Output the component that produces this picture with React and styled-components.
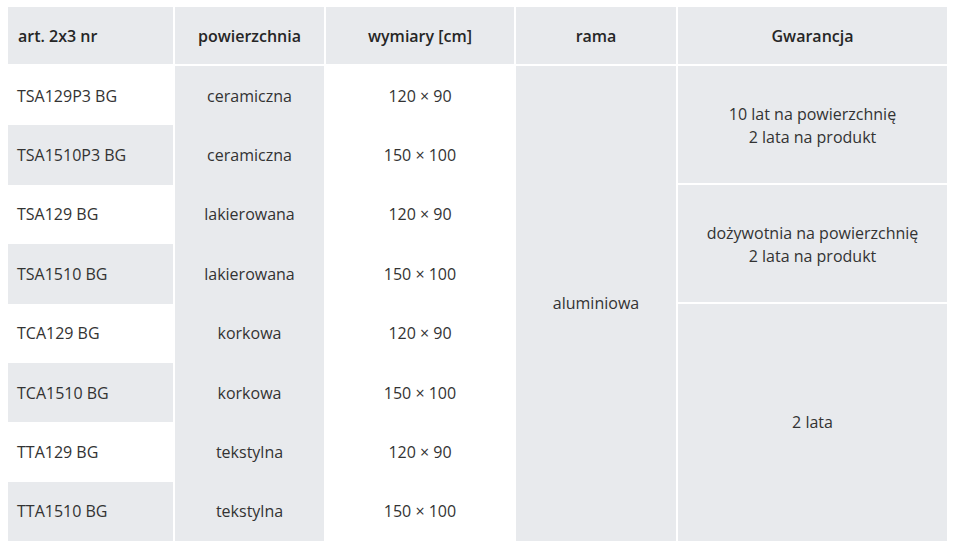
import styled, { createGlobalStyle } from 'styled-components';

const GlobalStyle = createGlobalStyle`
  body {
    margin: 0;
    background: #ffffff;
    font-family: 'Open Sans', 'Noto Sans', sans-serif;
    color: #333333;
  }
`;

const Page = styled.div`
  padding: 7px 0 0 8px;
`;

const Table = styled.div`
  display: grid;
  grid-template-columns: 165px 149px 188px 160px 269px;
  grid-template-rows: 59px repeat(8, 59.375px);
  column-gap: 2px;
  width: 939px;
  font-size: 16px;
`;

const HeadCell = styled.div`
  display: flex;
  align-items: center;
  justify-content: ${(p) => (p.$left ? 'flex-start' : 'center')};
  padding-left: ${(p) => (p.$left ? '10px' : '0')};
  margin-bottom: 2px;
  background: #e8eaed;
  font-weight: 600;
  color: #262626;
`;

const Cell = styled.div`
  display: flex;
  align-items: center;
  justify-content: ${(p) => (p.$left ? 'flex-start' : 'center')};
  padding-left: ${(p) => (p.$left ? '9px' : '0')};
  background: ${(p) => (p.$shaded ? '#e8eaed' : 'transparent')};
  grid-column: ${(p) => p.$col};
`;

const MergedCell = styled.div`
  display: flex;
  align-items: center;
  justify-content: center;
  text-align: center;
  line-height: 23px;
  background: #e8eaed;
  grid-column: ${(p) => p.$col};
  grid-row: ${(p) => p.$rows};
  margin-bottom: ${(p) => (p.$gap ? '2px' : '0')};
  padding-top: ${(p) => (p.$gap ? '4px' : '0')};
`;

const rows = [
  ['TSA129P3 BG', 'ceramiczna', '120 × 90'],
  ['TSA1510P3 BG', 'ceramiczna', '150 × 100'],
  ['TSA129 BG', 'lakierowana', '120 × 90'],
  ['TSA1510 BG', 'lakierowana', '150 × 100'],
  ['TCA129 BG', 'korkowa', '120 × 90'],
  ['TCA1510 BG', 'korkowa', '150 × 100'],
  ['TTA129 BG', 'tekstylna', '120 × 90'],
  ['TTA1510 BG', 'tekstylna', '150 × 100'],
];

export default function App() {
  return (
    <>
      <GlobalStyle />
      <Page>
        <Table>
          <HeadCell $left>art. 2x3 nr</HeadCell>
          <HeadCell>powierzchnia</HeadCell>
          <HeadCell>wymiary [cm]</HeadCell>
          <HeadCell>rama</HeadCell>
          <HeadCell>Gwarancja</HeadCell>

          {rows.map(([art, surface, size], i) => [
            <Cell key={`a${i}`} $col={1} $left $shaded={i % 2 === 1}>
              {art}
            </Cell>,
            <Cell key={`s${i}`} $col={2} $shaded>
              {surface}
            </Cell>,
            <Cell key={`d${i}`} $col={3}>
              {size}
            </Cell>,
          ])}

          <MergedCell $col={4} $rows="2 / span 8">
            aluminiowa
          </MergedCell>
          <MergedCell $col={5} $rows="2 / span 2" $gap>
            10 lat na powierzchnię
            <br />
            2 lata na produkt
          </MergedCell>
          <MergedCell $col={5} $rows="4 / span 2" $gap>
            dożywotnia na powierzchnię
            <br />
            2 lata na produkt
          </MergedCell>
          <MergedCell $col={5} $rows="6 / span 4">
            2 lata
          </MergedCell>
        </Table>
      </Page>
    </>
  );
}
